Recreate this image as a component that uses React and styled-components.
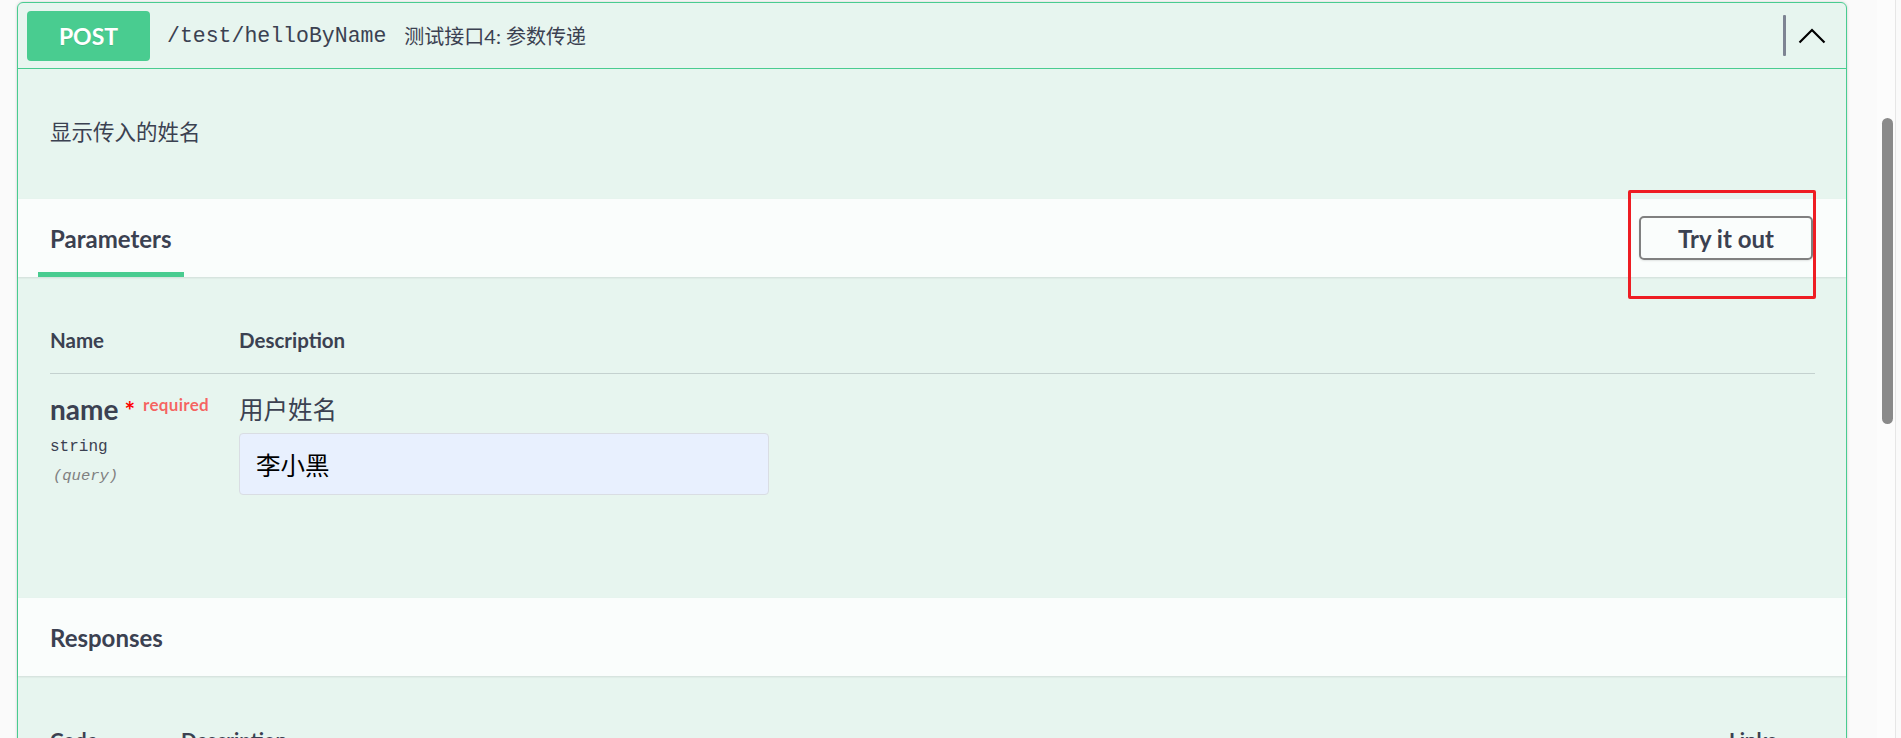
import React from "react";
import styled, { createGlobalStyle, css } from "styled-components";

const GlobalStyle = createGlobalStyle`
  html, body {
    margin: 0;
    padding: 0;
    background: #fafafa;
    overflow: hidden;
    font-family: Lato, "Noto Sans CJK SC", sans-serif;
    color: #3b4151;
  }
`;

const Page = styled.div`
  display: flex;
  height: 738px;
  overflow: hidden;
`;

const Main = styled.div`
  flex: 1;
  min-width: 0;
  padding: 2px 30px 0 17px;
`;

const ScrollTrack = styled.div`
  width: 19px;
  margin-right: 5px;
  padding: 118px 0 0 5px;
  box-sizing: border-box;
  background: #fcfcfc;
  border-right: 1px solid #e6e6e6;
`;

const ScrollThumb = styled.div`
  width: 11px;
  height: 306px;
  border-radius: 6px;
  background: #8a8a8a;
`;

const Opblock = styled.div`
  border: 1px solid #49cc90;
  border-radius: 6px;
  background: rgba(73, 204, 144, 0.1);
  box-shadow: 0 0 3px rgba(0, 0, 0, 0.19);
`;

const Summary = styled.div`
  display: flex;
  align-items: center;
  height: 66px;
  box-sizing: border-box;
  padding: 0 20px 0 9px;
  border-bottom: 1px solid #49cc90;
`;

const Method = styled.span`
  display: flex;
  align-items: center;
  justify-content: center;
  width: 123px;
  height: 50px;
  border-radius: 4px;
  background: #49cc90;
  color: #fff;
  font-size: 23px;
  font-weight: 700;
  text-shadow: 0 1px 0 rgba(0, 0, 0, 0.1);
`;

const Path = styled.span`
  margin-left: 17px;
  font-family: "Liberation Mono", monospace;
  font-size: 21.5px;
  color: #3b4151;
`;

const SummaryDesc = styled.span`
  margin-left: 18px;
  font-size: 20px;
  color: #3b4151;
`;

const Spacer = styled.div`
  flex: 1;
`;

const Divider = styled.span`
  width: 3px;
  height: 41px;
  border-radius: 1px;
  background: #7e8493;
`;

const Chevron = styled.svg`
  margin-left: 12px;
  display: block;
`;

const Description = styled.div`
  display: flex;
  align-items: center;
  height: 130px;
  box-sizing: border-box;
  padding: 0 32px 8px;
  font-size: 21.5px;
`;

const SectionHeader = styled.div`
  position: relative;
  display: flex;
  align-items: center;
  justify-content: space-between;
  height: 78px;
  padding: 0 33px 0 32px;
  background: rgba(255, 255, 255, 0.8);
  box-shadow: 0 1px 2px rgba(0, 0, 0, 0.1);
`;

const SectionTitle = styled.h4`
  position: relative;
  align-self: stretch;
  display: flex;
  align-items: center;
  margin: 0;
  font-size: 24px;
  font-weight: 700;
  color: #3b4151;

  ${({ $active }) =>
    $active &&
    css`
      &::after {
        content: "";
        position: absolute;
        left: -10%;
        bottom: 0;
        width: 120%;
        height: 5px;
        background: #49cc90;
      }
    `}
`;

const ButtonWrap = styled.div`
  position: relative;
`;

const TryButton = styled.button`
  display: block;
  width: 174px;
  height: 44px;
  padding: 0;
  border: 2px solid #808080;
  border-radius: 5px;
  background: transparent;
  box-shadow: 0 1px 2px rgba(0, 0, 0, 0.1);
  font-family: Lato, sans-serif;
  font-size: 24px;
  font-weight: 700;
  color: #3b4151;
`;

const Highlight = styled.span`
  position: absolute;
  left: -11px;
  right: -3px;
  top: -26px;
  bottom: -39px;
  border: 3px solid #ee1d23;
  border-radius: 2px;
  pointer-events: none;
`;

const ParamsBody = styled.div`
  height: 321px;
  box-sizing: border-box;
  padding: 48px 31px 0 32px;
`;

const Table = styled.div`
  display: grid;
  grid-template-columns: ${({ $cols }) => $cols};
`;

const HeadCell = styled.div`
  font-size: 20.5px;
  font-weight: 700;
  line-height: 30px;
  padding-bottom: 18px;
  border-bottom: 1px solid rgba(59, 65, 81, 0.2);
  color: #3b4151;
`;

const Cell = styled.div`
  padding-top: 18px;
`;

const ParamName = styled.div`
  font-size: 28px;
  font-weight: 700;
  line-height: 35px;
  white-space: nowrap;
`;

const Star = styled.span`
  margin-left: 6px;
  color: #f00;
  font-size: 25px;
`;

const Required = styled.span`
  position: relative;
  top: -9px;
  margin-left: 8px;
  font-size: 17px;
  letter-spacing: 0.3px;
  color: rgba(255, 0, 0, 0.6);
`;

const ParamType = styled.div`
  margin-top: 4px;
  font-family: "Liberation Mono", monospace;
  font-size: 16px;
  line-height: 24px;
`;

const ParamIn = styled.div`
  margin-top: 5px;
  padding-left: 3px;
  font-family: "Liberation Mono", monospace;
  font-size: 15.5px;
  line-height: 24px;
  font-style: italic;
  color: #808080;
`;

const ParamDesc = styled.div`
  font-size: 24.5px;
  line-height: 35px;
`;

const ParamInput = styled.input`
  display: block;
  width: 530px;
  height: 62px;
  margin-top: 6px;
  box-sizing: border-box;
  padding: 0 16px;
  border: 1px solid #d9dde3;
  border-radius: 4px;
  background: #e8f0fe;
  font-family: Lato, "Noto Sans CJK SC", sans-serif;
  font-size: 24.5px;
  color: #000;
  outline: none;
`;

const ResponsesBody = styled.div`
  padding: 49px 31px 0 32px;
`;

export default function App() {
  return (
    <>
      <GlobalStyle />
      <Page>
        <Main>
          <Opblock>
            <Summary>
              <Method>POST</Method>
              <Path>/test/helloByName</Path>
              <SummaryDesc>测试接口4: 参数传递</SummaryDesc>
              <Spacer />
              <Divider />
              <Chevron width="28" height="16" viewBox="0 0 28 16">
                <polyline
                  points="1.5,14.5 14,2 26.5,14.5"
                  fill="none"
                  stroke="#000"
                  strokeWidth="2.2"
                />
              </Chevron>
            </Summary>

            <Description>显示传入的姓名</Description>

            <SectionHeader>
              <SectionTitle $active>Parameters</SectionTitle>
              <ButtonWrap>
                <TryButton>Try it out</TryButton>
                <Highlight />
              </ButtonWrap>
            </SectionHeader>

            <ParamsBody>
              <Table $cols="189px 1fr">
                <HeadCell>Name</HeadCell>
                <HeadCell>Description</HeadCell>
                <Cell>
                  <ParamName>
                    name<Star>*</Star>
                    <Required>required</Required>
                  </ParamName>
                  <ParamType>string</ParamType>
                  <ParamIn>(query)</ParamIn>
                </Cell>
                <Cell>
                  <ParamDesc>用户姓名</ParamDesc>
                  <ParamInput defaultValue="李小黑" />
                </Cell>
              </Table>
            </ParamsBody>

            <SectionHeader>
              <SectionTitle>Responses</SectionTitle>
            </SectionHeader>

            <ResponsesBody>
              <Table $cols="131px 1fr 86px">
                <HeadCell>Code</HeadCell>
                <HeadCell>Description</HeadCell>
                <HeadCell>Links</HeadCell>
              </Table>
            </ResponsesBody>
          </Opblock>
        </Main>
        <ScrollTrack>
          <ScrollThumb />
        </ScrollTrack>
      </Page>
    </>
  );
}
